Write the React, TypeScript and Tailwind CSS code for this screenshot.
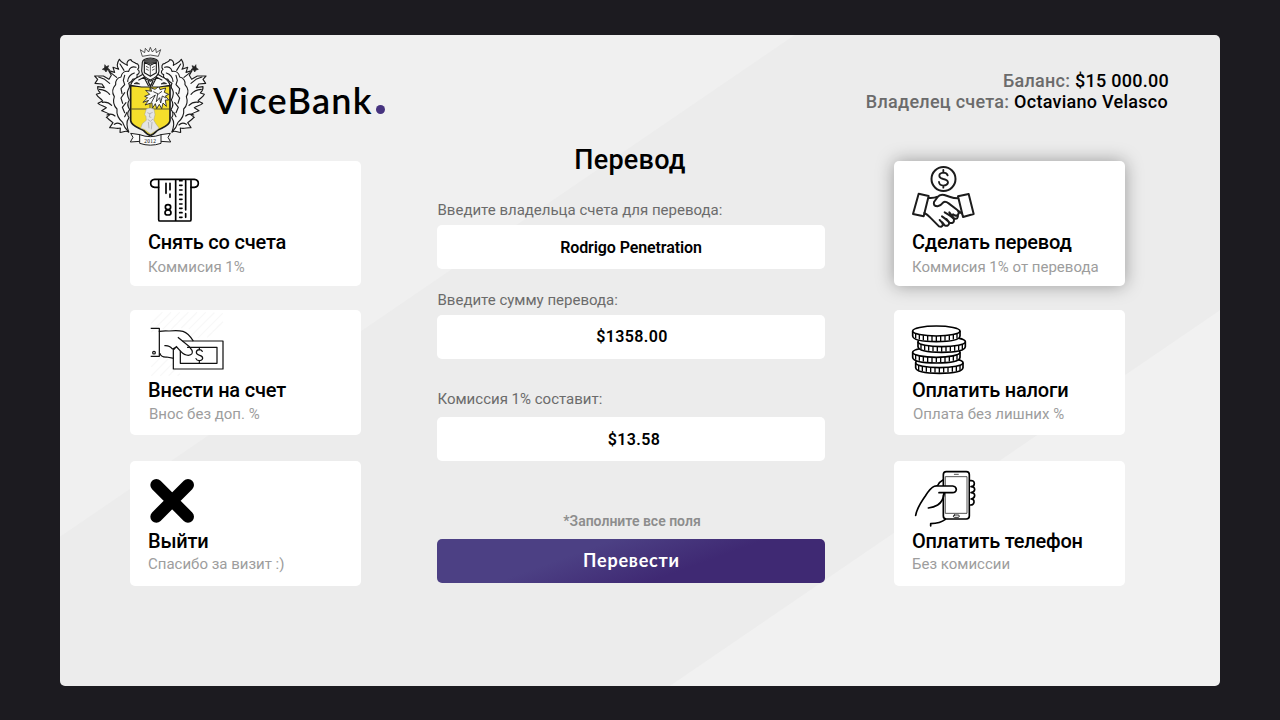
import type { ReactNode } from "react";

function CrestHalf() {
  return (
    <g fill="#fafafa" stroke="#1c1c1c" strokeWidth="3.4" strokeLinejoin="round" strokeLinecap="round">
      <path d="M131 276 C120 270 116 277 105 277 L106 264 C96 268 85 262 74 263 L84 248 C75 242 70 236 64 232 L75 224 C67 218 58 215 50 212 L64 203 C55 197 46 197 39 190 L53 183 C47 174 39 173 34 163 L46 159 C40 153 37 147 38 140 L58 143 L51 132 L30 130 L38 118 L29 108 L55 108 L72 118 L79 106 L71 92 L89 97 L84 82 L101 88 C94 77 97 67 103 58 C109 70 120 70 127 76 C123 67 130 59 138 59 C139 67 148 66 152 70 C162 71 164 81 158 88 C166 94 163 102 156 104 C159 113 151 119 144 117 C141 124 136 128 131 130 C134 136 135 142 130 148 C125 158 127 169 133 180 C127 188 128 200 134 209 C126 216 127 227 132 233 C122 246 126 260 131 276 Z" />
      <path fill="none" d="M153 82 C142 78 133 84 131 94 C119 92 110 99 108 111 C97 113 90 123 92 134 C82 145 81 159 88 170 C83 184 87 198 96 207 C94 223 101 237 113 247 C116 258 123 268 131 276" />
      <path fill="none" d="M105 72 L117 91 M76 97 L95 112 M41 111 L59 118 L74 130 M43 148 C57 149 67 154 74 163 M52 187 C64 185 73 189 80 196 M66 225 C75 221 84 222 90 228 M88 253 C96 248 104 249 110 255" />
      <path fill="none" d="M148 99 C136 103 129 112 128 124 M119 106 L115 121 L119 134 L108 146 L111 161 M119 158 L108 174 L113 190 M123 188 L112 202 L119 218 M126 217 L119 230" />
      <path fill="#222" strokeWidth="2" d="M60 75 L63 80 L71 77 L68 84 L74 89 L66 90 L63 96 L59 90 L52 88 L58 84 Z" />
    </g>
  );
}

function Crest() {
  return (
    <svg width="130" height="115" viewBox="0 0 390 345" aria-hidden="true">
      <CrestHalf />
      <g transform="translate(392 0) scale(-1 1)"><CrestHalf /></g>
      <path d="M137 137 H255 V242 C253 260 228 263 216 272 Q204 285 196 286 Q188 285 176 272 C164 263 139 260 137 242 Z" fill="#f5de2b" stroke="#1c1c1c" strokeWidth="5" />
      <path d="M195 140 V207 M139 207 H253" stroke="#333" strokeWidth="2.5" />
      <g fill="#fafafa" stroke="#222" strokeWidth="2.6" strokeLinejoin="round">
        <path d="M180 195 L191 181 L174 187 L188 173 L179 169 L194 163 L182 151 L200 154 L196 143 L210 148 L222 139 L225 149 L242 144 L238 157 L251 163 L241 168 L251 180 L241 180 L244 199 L234 189 L230 206 L223 193 L215 206 L211 191 L202 205 L201 188 Z" />
        <path fill="none" d="M193 177 L211 165 L200 186 M205 155 L220 162 L231 154 M218 162 L214 185 L224 173 L227 189 L232 168 L243 174" />
        <path strokeWidth="1.3" stroke="#999" fill="#e4e4e4" d="M184 207 Q196 200 207 208 L210 224 L206 240 L213 252 L222 264 L214 271 L197 282 L178 268 L167 265 L172 251 L184 241 L183 229 L179 224 Z" />
        <path fill="none" stroke="#888" strokeWidth="1.5" d="M187 218 L194 221 L203 217 M195 220 L193 231 L199 232 M188 238 L196 244 L204 237 M190 246 L192 265 M201 246 L199 268" />
      </g>
      <g fill="#fafafa" stroke="#1c1c1c" strokeWidth="3.4" strokeLinejoin="round">
        <path d="M137 136 Q141 119 161 110 L175 102 L181 116 L196 124 L212 116 L217 102 L231 110 Q251 119 255 136 L223 141 H169 Z" />
        <path d="M160 121 L177 112 L191 139 M232 121 L215 112 L201 139" fill="none" />
        <path d="M147 131 Q156 123 164 132 Z M245 131 Q236 123 228 132 Z" fill="#333" strokeWidth="2" />
        <path d="M189 123 L196 139 L204 123" fill="none" strokeWidth="4" />
        <path d="M172 67 Q173 56 196 54 Q219 56 220 67 L222 93 Q221 109 196 120 Q171 109 170 93 Z" />
        <path d="M178 67 L196 76 L214 67 V98 L196 109 L178 98 Z" />
        <path d="M196 77 V108 M183 79 L191 83 M183 87 L191 91 M201 83 L209 79 M201 91 L209 87" strokeWidth="2.2" />
        <path d="M174 61 Q196 54 218 61 L212 67 Q196 75 180 67 Z" fill="#555" strokeWidth="2" />
        <path d="M172 49 L166 29 L179 38 L181 25 L191 36 L196 22 L202 36 L212 25 L214 38 L227 29 L220 49 Q196 41 172 49 Z" strokeWidth="2.2" />
        <path d="M165 284 L137 280 L144 292 L136 306 L165 304 M227 284 L256 280 L249 292 L257 306 L227 304" strokeWidth="3" />
        <path d="M164 284 Q196 296 228 284 V310 Q196 321 164 310 Z" strokeWidth="3" />
      </g>
      <text x="196" y="309" textAnchor="middle" fontFamily="Liberation Serif, serif" fontSize="16" letterSpacing="1">2012</text>
    </svg>
  );
}

function AtmIcon() {
  return (
    <svg width="80" height="69" viewBox="69 18 240 207" className="block" fill="none" stroke="#000" strokeWidth="5" strokeLinejoin="round" strokeLinecap="round" aria-hidden="true">
      <path d="M101 97 H89 Q77 96 77 85 Q77 74 89 73 H208 Q220 74 220 85 Q220 96 208 97 H198" />
      <path d="M101 77 V194 Q101 198 105 198 H194 Q198 198 198 194 V77 M152 76 V198 M182 77 V165 M182 176 V187" />
      <path d="M123 85 V115 M135 85 V104 M135 117 V127 M164 77 H171 M164 91 H171 M164 105 H171 M164 119 H171 M164 133 H171 M164 147 H171 M164 160 H171 M164 173 H171 M164 187 H171" />
      <path d="M129 149 Q137 149 137 156 Q137 164 129 164 Q121 164 121 156 Q121 149 129 149 Z M129 165 Q138 165 138 173 Q138 180 129 180 Q120 180 120 173 Q120 165 129 165 Z" />
    </svg>
  );
}

function CashHandIcon() {
  return (
    <svg width="80" height="68" viewBox="69 15 240 204" className="block" fill="none" stroke="#111" strokeWidth="3.7" strokeLinejoin="round" strokeLinecap="square" aria-hidden="true">
      <path stroke="#f8f8f8" d="M80 54 L111 23 M80 80 L137 23 M115 71 L163 23 M140 72 L189 23 M170 68 L215 23 M193 71 L241 23 M195 96 L267 24 M220 98 L292 26 M248 96 L293 51 M80 184 L110 154 M80 211 L129 162 M107 211 L143 175 M132 211 L151 192 M159 211 L163 207" />
      <path d="M79 70 H103 V154 H79" />
      <circle cx="87" cy="143" r="4" />
      <path d="M103 79 Q116 77 132 78 Q158 75 174 79 Q190 84 204 107" />
      <path d="M174 108 H294 V192 H145 V135 L154 125 M188 127 H276 V175 H166 V139" />
      <path d="M120 122 Q134 121 142 132 L155 126 L168 140 Q178 151 190 151 Q206 149 201 136 Q193 123 177 112 L160 98" />
      <path d="M105 146 Q108 157 125 156 L145 160" />
      <path strokeLinecap="round" d="M232 139 Q229 134 223 134 Q214 135 214 142 Q214 149 224 151 Q233 153 233 160 Q231 167 223 167 Q215 167 213 161 M223 128 V133 M223 168 V174" />
    </svg>
  );
}

function ExitIcon() {
  return (
    <svg width="80" height="68" viewBox="69 18 240 204" className="block" fill="none" stroke="#000" strokeWidth="36" strokeLinecap="round" aria-hidden="true">
      <path d="M94 90 L189 185 M189 90 L94 185" />
    </svg>
  );
}

function HandshakeIcon() {
  return (
    <svg width="80" height="69" viewBox="81 33 240 207" className="block overflow-visible" fill="none" stroke="#1c1c1c" strokeWidth="6" strokeLinejoin="round" strokeLinecap="round" aria-hidden="true">
      <circle cx="175.500" cy="87" r="36" />
      <path strokeWidth="5.500" d="M188 76 Q185 68 175 68 Q163 69 163 77 Q163 84 175 87 Q189 90 189 98 Q187 106 175 107 Q163 106 162 96 M175 60 V68 M175 107 V113" />
      <path d="M101 131 L131 138 L116 199 L84 192 Z M219 139 L251 132 L266 192 L234 201 Z" />
      <path d="M132 144 Q147 145 158 140 M218 145 Q206 145 196 141 L178 135 Q164 132 158 141 L147 156 Q144 169 158 169 Q166 168 175 157 Q181 153 191 160 L217 180 Q225 187 219 194 Q212 200 204 193 M118 189 Q127 193 136 203 L162 229 Q171 233 174 224 Q172 217 164 210 M172 217 L179 226 Q190 231 193 219 Q190 212 171 199 M184 207 L194 219 Q208 221 207 208 Q202 200 179 187 M193 187 L207 205 Q220 210 219 194 M222 184 L230 190" />
    </svg>
  );
}

const coins = [
  { x: 83, y: 78, w: 142 },
  { x: 99, y: 110, w: 142 },
  { x: 83, y: 142, w: 142 },
  { x: 92, y: 173, w: 142 },
];

const ridges = [9, 20, 32, 45, 58, 71, 84, 97, 110, 122, 133];

function CoinsIcon() {
  return (
    <svg width="80" height="68" viewBox="81 15 240 204" className="block overflow-visible" fill="#fff" stroke="#000" strokeWidth="5" strokeLinejoin="round" aria-hidden="true">
      {coins.slice().reverse().map((c) => (
        <g key={c.y}>
          <path d={`M${c.x} ${c.y} v15 q2 17 71 17 q69 0 71 -17 v-15`} />
          <ellipse cx={c.x + 71} cy={c.y} rx="71" ry="15" />
          {ridges.map((r) => {
            const t = (r - 71) / 71;
            const drop = Math.sqrt(1 - t * t) * 15;
            return <path key={r} strokeWidth="4" d={`M${c.x + r} ${c.y + drop} v15`} />;
          })}
        </g>
      ))}
    </svg>
  );
}

function PhoneHandIcon() {
  return (
    <svg width="80" height="68" viewBox="81 18 240 204" className="block overflow-visible" fill="none" stroke="#000" strokeWidth="5" strokeLinejoin="round" strokeLinecap="round" aria-hidden="true">
      <rect x="175" y="50" width="78" height="142" rx="9" />
      <path strokeWidth="2.500" stroke="#333" d="M182 65 H246 V175 H182 Z M208 58 H220" />
      <rect x="205" y="180" width="18" height="7" rx="3.500" strokeWidth="2.500" />
      <path fill="#fff" d="M255 77 Q268 75 268 86 Q268 94 258 95 Q269 95 269 104 Q268 112 258 113 Q269 113 269 122 Q268 131 258 132 Q268 132 267 142 Q265 151 255 150" />
      <path d="M174 75 Q163 80 157 93" />
      <path fill="#fff" stroke="none" d="M151 93 H204 Q214 94 214 104 Q212 113 202 113 H176 L160 140 Z" />
      <path d="M92 181 Q96 158 121 123 Q137 98 148 94 Q153 92 160 93 H203 Q213 94 214 103 Q213 113 202 113 H162 M178 114 Q174 140 158 150 Q147 157 130 159 M181 193 Q166 205 137 206 V213" />
    </svg>
  );
}

type ActionProps = {
  icon: ReactNode;
  title: string;
  note: string;
  noteClass: string;
  className?: string;
};

function ActionCard({ icon, title, note, noteClass, className = "" }: ActionProps) {
  return (
    <button type="button" className={`flex h-[125px] w-[231px] flex-col items-start justify-start rounded-[5px] bg-white pl-[18px] text-left ${className}`}>
      {icon}
      <span className="text-[20px] leading-6 font-medium tracking-[-0.2px] whitespace-nowrap text-black">{title}</span>
      <span className={`text-[15px] leading-[18px] whitespace-nowrap text-[#9d9d9d] ${noteClass}`}>{note}</span>
    </button>
  );
}

type FieldProps = { label: string; value: string; className: string; labelClass: string; valueClass: string };

function Field({ label, value, className, labelClass, valueClass }: FieldProps) {
  return (
    <label className={`block ${className}`}>
      <span className={`block pl-[0.5px] text-[15px] leading-[18px] text-[#6b6b6b] ${labelClass}`}>{label}</span>
      <span className={`flex h-11 items-center justify-center rounded-[5px] bg-white text-[16px] font-semibold text-black ${valueClass}`}>{value}</span>
    </label>
  );
}

export default function App() {
  return (
    <div className="h-[720px] w-[1280px] overflow-hidden bg-[#1c1b20] px-[60px] pt-[35px] font-[Roboto,sans-serif]">
      <main className="flex h-[651px] w-[1160px] flex-col rounded-[5px] bg-[linear-gradient(145.670deg,#f0f0f0_0_413.8px,#ececec_414.8px_881px,#f1f1f1_882px)]">
        <header className="flex h-[110px] shrink-0 justify-between pr-[51px] pl-[25px]">
          <div className="flex h-[110px] items-start">
            <div className="mt-[5px] h-[115px] w-[130px]"><Crest /></div>
            <div className="-ml-[2px] mt-[43px] flex items-baseline font-[Lato,sans-serif]">
              <span className="text-[36px] leading-[44px] font-semibold tracking-[1.3px] text-black">ViceBank</span>
              <span className="ml-[3px] h-[9px] w-[9px] rounded-full bg-[#46337f]" />
            </div>
          </div>
          <div className="mt-[35px] text-right text-[18px] leading-[21px] font-medium tracking-[0.27px] text-[#6b6b6b]">
            <p>Баланс: <span className="text-black">$15 000.00</span></p>
            <p className="pr-px">Владелец счета: <span className="text-black">Octaviano Velasco</span></p>
          </div>
        </header>

        <div className="flex pl-[70px]">
          <nav className="flex w-[231px] flex-col pt-4">
            <ActionCard icon={<AtmIcon />} title="Снять со счета" note="Коммисия 1%" noteClass="mt-1" />
            <ActionCard icon={<CashHandIcon />} title="Внести на счет" note="Внос без доп. %" noteClass="mt-[3px] pl-px" className="mt-6" />
            <ActionCard icon={<ExitIcon />} title="Выйти" note="Спасибо за визит :)" noteClass="mt-[2px]" className="mt-[26px]" />
          </nav>

          <section className="ml-[76px] flex w-[388px] flex-col">
            <h1 className="-ml-[2px] text-center text-[27px] leading-[30px] font-medium tracking-[0.25px] text-black">Перевод</h1>
            <Field label="Введите владельца счета для перевода:" value="Rodrigo Penetration" className="mt-[26px]" labelClass="mb-1.5" valueClass="pt-[2px] tracking-[-0.1px]" />
            <Field label="Введите сумму перевода:" value="$1358.00" className="mt-[22px]" labelClass="mb-1.5" valueClass="pl-[2px] tracking-[0.4px]" />
            <Field label="Комиссия 1% составит:" value="$13.58" className="mt-[31px]" labelClass="mb-[9px]" valueClass="pt-[2px] pl-[6px] tracking-[0.4px]" />
            <p className="mt-[52px] pl-[2px] text-center text-[14px] leading-4 font-semibold text-[#8d8d8d]">*Заполните все поля</p>
            <button type="button" className="mt-[10px] h-11 rounded-[5px] bg-[linear-gradient(160deg,#4c4084_35%,#3f2973_65%)] pb-px pl-px font-[Lato,sans-serif] text-[18px] font-bold tracking-[0.8px] text-white">Перевести</button>
          </section>

          <nav className="ml-[69px] flex w-[231px] flex-col pt-4">
            <ActionCard icon={<HandshakeIcon />} title="Сделать перевод" note="Коммисия 1% от перевода" noteClass="mt-1" className="shadow-[0_0_18px_rgba(0,0,0,0.35)]" />
            <ActionCard icon={<CoinsIcon />} title="Оплатить налоги" note="Оплата без лишних %" noteClass="mt-[3px] pl-px" className="mt-6" />
            <ActionCard icon={<PhoneHandIcon />} title="Оплатить телефон" note="Без комиссии" noteClass="mt-[2px]" className="mt-[26px]" />
          </nav>
        </div>
      </main>
    </div>
  );
}
